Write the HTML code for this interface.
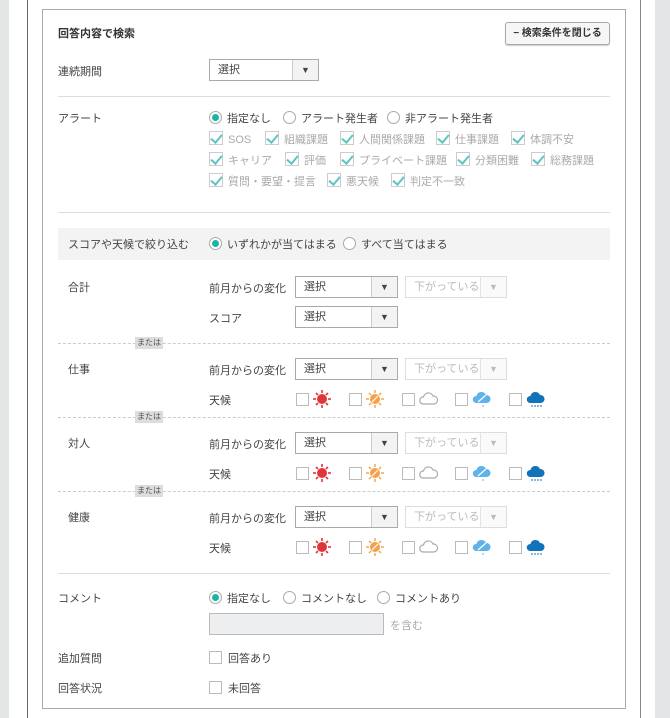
<!DOCTYPE html>
<html><head><meta charset="utf-8"><style>
*{margin:0;padding:0;box-sizing:border-box}
body{width:670px;height:718px;background:#fff;position:relative;overflow:hidden;font-family:"Liberation Sans","Noto Sans CJK JP",sans-serif;font-size:11px;color:#444}
.a{position:absolute;white-space:nowrap}
.t{line-height:14px;transform:translateY(-5px)}
.sel{position:absolute;height:22px;border:1px solid #aaa;background:#fff}
.sel span{position:absolute;left:8px;top:0;line-height:20px}
.sel i{position:absolute;right:0;top:0;bottom:0;width:26px;border-left:1px solid #ccc;background:#f3f3f3;font-style:normal;text-align:center;line-height:20px;font-size:9px}
.dis{border-color:#ddd;color:#bbb}.dis i{border-color:#e3e3e3;background:#fafafa;color:#bbb}
.rad{position:absolute;width:13px;height:13px;border:1px solid #aaa;border-radius:50%;background:#fff}
.rad.on::after{content:"";position:absolute;left:2px;top:2px;width:7px;height:7px;border-radius:50%;background:#1ab3a6}
.cb{position:absolute;width:13px;height:13px;border:1px solid #bbb;background:#fff}
.ck{position:absolute;width:14px;height:14px;border:1px solid #ccc;background:#fff}
.ck::after{content:"";position:absolute;left:3px;top:0px;width:5px;height:9px;border:solid #5cc6c0;border-width:0 2px 2px 0;transform:rotate(40deg)}
.g{color:#aaa}
.hr{position:absolute;left:58px;width:552px;height:1px;background:#ddd}
.dash{position:absolute;left:58px;width:552px;border-top:1px dashed #ccc;height:0}
.tag{position:absolute;left:135px;width:28px;height:12px;background:#ddd;font-size:8px;color:#555;text-align:center;line-height:12px}
</style></head><body>
<div class="a" style="left:0;top:0;width:9px;height:718px;background:#e3e5e6"></div>
<div class="a" style="left:655px;top:0;width:15px;height:718px;background:#e3e5e6"></div>
<div class="a" style="left:27px;top:0;width:1px;height:718px;background:#666"></div>
<div class="a" style="left:640px;top:0;width:1px;height:718px;background:#888"></div>
<div class="a" style="left:42px;top:9px;width:584px;height:700px;border:1px solid #aaa"></div>

<div class="a t" style="left:58px;top:32px;font-weight:bold;color:#333">回答内容で検索</div>
<div class="a" style="left:505px;top:22px;width:105px;height:23px;border:1px solid #aaa;border-radius:3px;background:#f6f6f6;box-shadow:0 1px 1px #ccc;font-size:10px;font-weight:bold;color:#333;text-align:center;line-height:21px">− 検索条件を閉じる</div>

<div class="a t" style="left:58px;top:70px">連続期間</div>
<div class="sel" style="left:209px;top:59px;width:110px"><span>選択</span><i>▼</i></div>
<div class="hr" style="top:96px"></div>

<div class="a t" style="left:58px;top:117px">アラート</div>
<div class="rad on" style="left:209px;top:111px"></div><div class="a t" style="left:227px;top:117px">指定なし</div>
<div class="rad" style="left:283px;top:111px"></div><div class="a t" style="left:301px;top:117px">アラート発生者</div>
<div class="rad" style="left:387px;top:111px"></div><div class="a t" style="left:405px;top:117px">非アラート発生者</div>

<div class="ck" style="left:209px;top:131px"></div><div class="a t g" style="left:228px;top:138px">SOS</div>
<div class="ck" style="left:265px;top:131px"></div><div class="a t g" style="left:284px;top:138px">組織課題</div>
<div class="ck" style="left:340px;top:131px"></div><div class="a t g" style="left:359px;top:138px">人間関係課題</div>
<div class="ck" style="left:436px;top:131px"></div><div class="a t g" style="left:455px;top:138px">仕事課題</div>
<div class="ck" style="left:511px;top:131px"></div><div class="a t g" style="left:530px;top:138px">体調不安</div>

<div class="ck" style="left:209px;top:152px"></div><div class="a t g" style="left:228px;top:159px">キャリア</div>
<div class="ck" style="left:285px;top:152px"></div><div class="a t g" style="left:304px;top:159px">評価</div>
<div class="ck" style="left:340px;top:152px"></div><div class="a t g" style="left:359px;top:159px">プライベート課題</div>
<div class="ck" style="left:456px;top:152px"></div><div class="a t g" style="left:475px;top:159px">分類困難</div>
<div class="ck" style="left:531px;top:152px"></div><div class="a t g" style="left:550px;top:159px">総務課題</div>

<div class="ck" style="left:209px;top:173px"></div><div class="a t g" style="left:228px;top:180px">質問・要望・提言</div>
<div class="ck" style="left:327px;top:173px"></div><div class="a t g" style="left:346px;top:180px">悪天候</div>
<div class="ck" style="left:391px;top:173px"></div><div class="a t g" style="left:410px;top:180px">判定不一致</div>
<div class="hr" style="top:212px"></div>

<div class="a" style="left:58px;top:228px;width:552px;height:32px;background:#f3f3f3"></div>
<div class="a t" style="left:68px;top:243px">スコアや天候で絞り込む</div>
<div class="rad on" style="left:209px;top:237px"></div><div class="a t" style="left:227px;top:243px">いずれかが当てはまる</div>
<div class="rad" style="left:343px;top:237px"></div><div class="a t" style="left:361px;top:243px">すべて当てはまる</div>

<svg width="0" height="0" style="position:absolute"><defs>
<g id="s1"><g stroke="#e0363a" stroke-width="1.6"><line x1="9" y1="0" x2="9" y2="3"/><line x1="9" y1="15" x2="9" y2="18"/><line x1="0" y1="9" x2="3" y2="9"/><line x1="15" y1="9" x2="18" y2="9"/><line x1="3" y1="3" x2="5" y2="5"/><line x1="13" y1="13" x2="15" y2="15"/><line x1="15" y1="3" x2="13" y2="5"/><line x1="3" y1="15" x2="5" y2="13"/></g><circle cx="9" cy="9" r="5" fill="#e0363a"/></g>
<g id="s2"><g stroke="#f5a04a" stroke-width="1.4"><line x1="9" y1="0" x2="9" y2="3"/><line x1="9" y1="15" x2="9" y2="18"/><line x1="0" y1="9" x2="3" y2="9"/><line x1="15" y1="9" x2="18" y2="9"/><line x1="3" y1="3" x2="5" y2="5"/><line x1="13" y1="13" x2="15" y2="15"/><line x1="15" y1="3" x2="13" y2="5"/><line x1="3" y1="15" x2="5" y2="13"/></g><circle cx="9" cy="9" r="5" fill="#f5a04a"/><path d="M6 12 L12 6" stroke="#fff" stroke-width="1.2"/></g>
<g id="c1"><path d="M4 14 a3.5 3.5 0 0 1 0.5-7 a5 5 0 0 1 9.5-1 a4 4 0 0 1 1 8z" fill="none" stroke="#aaa" stroke-width="1.2"/></g>
<g id="c2"><path d="M4 13 a3.5 3.5 0 0 1 0.5-7 a5 5 0 0 1 9.5-1 a4 4 0 0 1 1 8z" fill="#5fb3e8"/><path d="M6 12 L14 5" stroke="#fff" stroke-width="1.2"/><line x1="11" y1="15" x2="11" y2="17" stroke="#5fb3e8"/></g>
<g id="c3"><path d="M4 13 a3.5 3.5 0 0 1 0.5-7 a5 5 0 0 1 9.5-1 a4 4 0 0 1 1 8z" fill="#1273b8"/><g stroke="#1273b8"><line x1="6" y1="15" x2="6" y2="17"/><line x1="9" y1="15" x2="9" y2="17"/><line x1="12" y1="15" x2="12" y2="17"/><line x1="15" y1="15" x2="15" y2="17"/></g></g>
</defs></svg>

<div class="a t" style="left:68px;top:286px">合計</div>
<div class="a t" style="left:209px;top:287px">前月からの変化</div>
<div class="sel" style="left:295px;top:276px;width:103px"><span>選択</span><i>▼</i></div>
<div class="sel dis" style="left:405px;top:276px;width:102px"><span>下がっている</span><i>▼</i></div>
<div class="a t" style="left:209px;top:317px">スコア</div>
<div class="sel" style="left:295px;top:306px;width:103px"><span>選択</span><i>▼</i></div>
<div class="dash" style="top:343px"></div><div class="tag" style="top:337px">または</div>

<div class="a t" style="left:68px;top:368px">仕事</div>
<div class="a t" style="left:209px;top:369px">前月からの変化</div>
<div class="sel" style="left:295px;top:358px;width:103px"><span>選択</span><i>▼</i></div>
<div class="sel dis" style="left:405px;top:358px;width:102px"><span>下がっている</span><i>▼</i></div>
<div class="a t" style="left:209px;top:399px">天候</div>
<div class="cb" style="left:296px;top:393px"></div><svg class="a" style="left:313px;top:390px" width="19" height="19"><use href="#s1"/></svg>
<div class="cb" style="left:349px;top:393px"></div><svg class="a" style="left:366px;top:390px" width="19" height="19"><use href="#s2"/></svg>
<div class="cb" style="left:402px;top:393px"></div><svg class="a" style="left:419px;top:390px" width="20" height="19"><use href="#c1"/></svg>
<div class="cb" style="left:455px;top:393px"></div><svg class="a" style="left:472px;top:390px" width="20" height="19"><use href="#c2"/></svg>
<div class="cb" style="left:509px;top:393px"></div><svg class="a" style="left:526px;top:390px" width="20" height="19"><use href="#c3"/></svg>
<div class="dash" style="top:417px"></div><div class="tag" style="top:411px">または</div>

<div class="a t" style="left:68px;top:442px">対人</div>
<div class="a t" style="left:209px;top:443px">前月からの変化</div>
<div class="sel" style="left:295px;top:432px;width:103px"><span>選択</span><i>▼</i></div>
<div class="sel dis" style="left:405px;top:432px;width:102px"><span>下がっている</span><i>▼</i></div>
<div class="a t" style="left:209px;top:473px">天候</div>
<div class="cb" style="left:296px;top:467px"></div><svg class="a" style="left:313px;top:464px" width="19" height="19"><use href="#s1"/></svg>
<div class="cb" style="left:349px;top:467px"></div><svg class="a" style="left:366px;top:464px" width="19" height="19"><use href="#s2"/></svg>
<div class="cb" style="left:402px;top:467px"></div><svg class="a" style="left:419px;top:464px" width="20" height="19"><use href="#c1"/></svg>
<div class="cb" style="left:455px;top:467px"></div><svg class="a" style="left:472px;top:464px" width="20" height="19"><use href="#c2"/></svg>
<div class="cb" style="left:509px;top:467px"></div><svg class="a" style="left:526px;top:464px" width="20" height="19"><use href="#c3"/></svg>
<div class="dash" style="top:491px"></div><div class="tag" style="top:485px">または</div>

<div class="a t" style="left:68px;top:516px">健康</div>
<div class="a t" style="left:209px;top:517px">前月からの変化</div>
<div class="sel" style="left:295px;top:506px;width:103px"><span>選択</span><i>▼</i></div>
<div class="sel dis" style="left:405px;top:506px;width:102px"><span>下がっている</span><i>▼</i></div>
<div class="a t" style="left:209px;top:547px">天候</div>
<div class="cb" style="left:296px;top:541px"></div><svg class="a" style="left:313px;top:538px" width="19" height="19"><use href="#s1"/></svg>
<div class="cb" style="left:349px;top:541px"></div><svg class="a" style="left:366px;top:538px" width="19" height="19"><use href="#s2"/></svg>
<div class="cb" style="left:402px;top:541px"></div><svg class="a" style="left:419px;top:538px" width="20" height="19"><use href="#c1"/></svg>
<div class="cb" style="left:455px;top:541px"></div><svg class="a" style="left:472px;top:538px" width="20" height="19"><use href="#c2"/></svg>
<div class="cb" style="left:509px;top:541px"></div><svg class="a" style="left:526px;top:538px" width="20" height="19"><use href="#c3"/></svg>
<div class="hr" style="top:573px"></div>

<div class="a t" style="left:58px;top:597px">コメント</div>
<div class="rad on" style="left:209px;top:591px"></div><div class="a t" style="left:227px;top:597px">指定なし</div>
<div class="rad" style="left:283px;top:591px"></div><div class="a t" style="left:301px;top:597px">コメントなし</div>
<div class="rad" style="left:377px;top:591px"></div><div class="a t" style="left:395px;top:597px">コメントあり</div>
<div class="a" style="left:209px;top:613px;width:175px;height:22px;border:1px solid #bbb;background:#eceeef"></div>
<div class="a t g" style="left:390px;top:624px">を含む</div>

<div class="a t" style="left:58px;top:657px">追加質問</div>
<div class="cb" style="left:209px;top:651px"></div><div class="a t" style="left:228px;top:657px">回答あり</div>
<div class="a t" style="left:58px;top:687px">回答状況</div>
<div class="cb" style="left:209px;top:681px"></div><div class="a t" style="left:228px;top:687px">未回答</div>
</body></html>
